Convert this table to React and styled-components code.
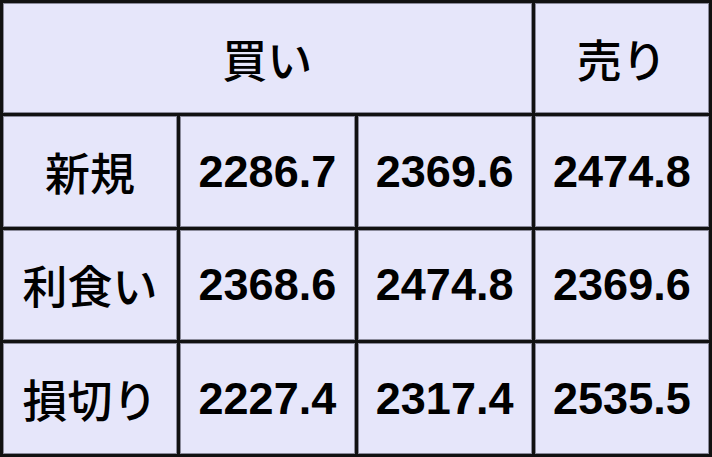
import React from 'react'
import styled, { createGlobalStyle } from 'styled-components'

const GlobalStyle = createGlobalStyle`
    html, body {
        margin: 0;
        padding: 0;
        background: #ffffff;
    }
`

const rows = [
    { label: '新規', values: ['2286.7', '2369.6', '2474.8'] },
    { label: '利食い', values: ['2368.6', '2474.8', '2369.6'] },
    { label: '損切り', values: ['2227.4', '2317.4', '2535.5'] },
]

function App() {
    return (
        <>
            <GlobalStyle />
            <Table>
                <thead>
                    <Row>
                        <Cell colSpan={3}>買い</Cell>
                        <Cell>売り</Cell>
                    </Row>
                </thead>
                <tbody>
                    {rows.map(row => (
                        <Row key={row.label}>
                            <Cell>{row.label}</Cell>
                            {row.values.map((v, i) => (
                                <Cell key={i} $num>{v}</Cell>
                            ))}
                        </Row>
                    ))}
                </tbody>
            </Table>
        </>
    )
}

export default App

const Table = styled.table`
    width: 712px;
    height: 457px;
    table-layout: fixed;
    border-collapse: separate;
    border-spacing: 3px;
    background-color: #111111;
    padding: 0;
    margin: 0;
`

const Row = styled.tr`
    height: 110px;
`

const Cell = styled.td`
    background-color: #e6e6fa;
    border: 1px solid #8a8a9a;
    padding: 0;
    text-align: center;
    vertical-align: middle;
    color: #000000;
    font-family: ${p => p.$num ? '"Liberation Sans", Arial' : '"Noto Sans CJK JP", "Liberation Sans"'}, sans-serif;
    font-weight: ${p => p.$num ? 700 : 500};
    font-size: 45px;
    line-height: 1;
`
